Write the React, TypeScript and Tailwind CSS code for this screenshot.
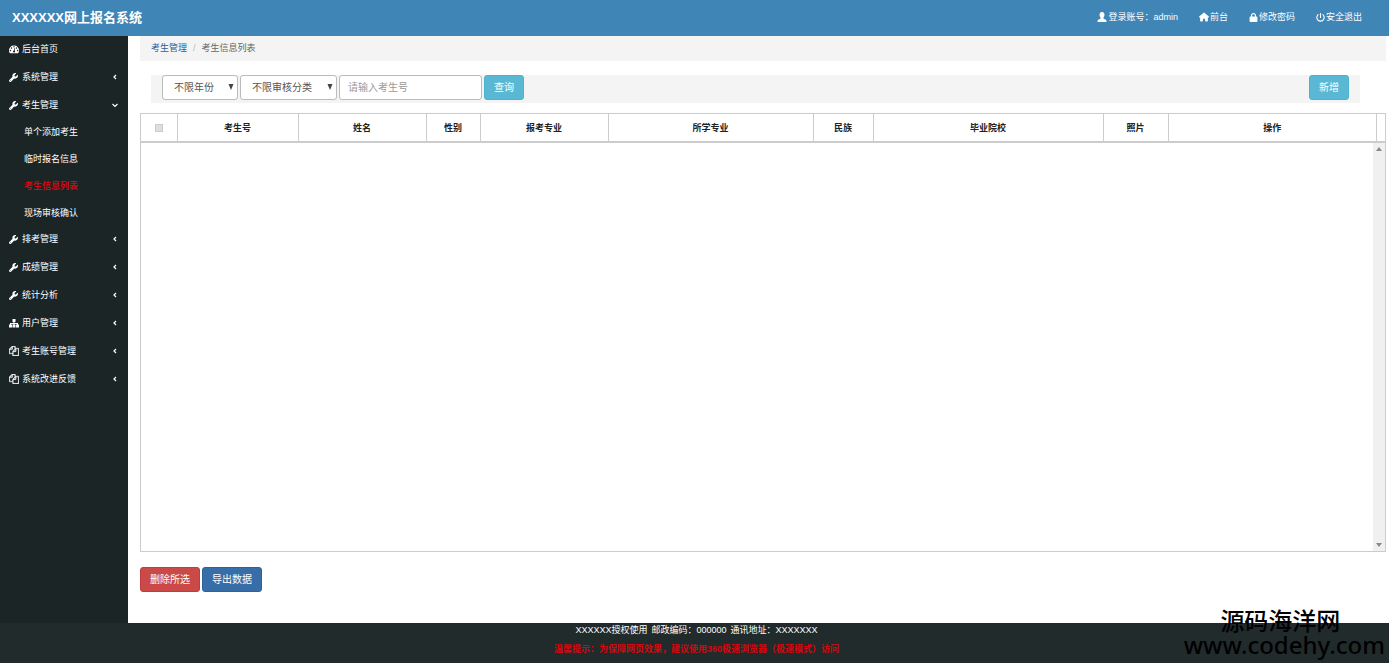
import React, { type FC, type ReactNode } from "react";
import { FaHouse, FaLock, FaPowerOff, FaWrench } from "react-icons/fa6";

interface MenuItem {
  label: string;
  icon: ReactNode;
  arrow?: boolean;
  children?: string[];
}

const menu: MenuItem[] = [
  { label: "后台首页", icon: <DashboardIcon /> },
  { label: "系统管理", icon: <FaWrench />, arrow: true },
  {
    label: "考生管理",
    icon: <FaWrench />,
    arrow: true,
    children: ["单个添加考生", "临时报名信息", "考生信息列表", "现场审核确认"],
  },
  { label: "排考管理", icon: <FaWrench />, arrow: true },
  { label: "成绩管理", icon: <FaWrench />, arrow: true },
  { label: "统计分析", icon: <FaWrench />, arrow: true },
  { label: "用户管理", icon: <SitemapIcon />, arrow: true },
  { label: "考生账号管理", icon: <CopyIcon />, arrow: true },
  { label: "系统改进反馈", icon: <CopyIcon />, arrow: true },
];

const activeItem = "考生信息列表";

const columns = [
  { label: "考生号", width: "w-[121px]" },
  { label: "姓名", width: "w-[128px]" },
  { label: "性别", width: "w-[54px]" },
  { label: "报考专业", width: "w-[128px]" },
  { label: "所学专业", width: "w-[205px]" },
  { label: "民族", width: "w-[60px]" },
  { label: "毕业院校", width: "w-[230px]" },
  { label: "照片", width: "w-[65px]" },
  { label: "操作", width: "" },
];

function DashboardIcon() {
  return (
    <svg viewBox="0 0 1792 1792" fill="currentColor" width="10" height="10">
      <path d="M384 1152q0-53-37.500-90.500t-90.500-37.500-90.500 37.500-37.500 90.500 37.500 90.500 90.500 37.500 90.500-37.500 37.500-90.500zm192-448q0-53-37.500-90.500t-90.500-37.500-90.500 37.500-37.500 90.500 37.500 90.500 90.500 37.500 90.500-37.500 37.500-90.500zm428 481l101-382q6-26-7.500-48.500t-38.500-29.500-48 6.500-30 39.500l-101 382q-60 5-107 43.500t-63 98.500q-20 77 20 146t117 89 146-20 89-117q16-60-6-117t-72-91zm660-33q0-53-37.500-90.500t-90.500-37.500-90.500 37.500-37.500 90.500 37.500 90.500 90.500 37.500 90.500-37.500 37.500-90.500zm-640-640q0-53-37.500-90.500t-90.500-37.500-90.500 37.500-37.500 90.500 37.500 90.500 90.500 37.500 90.500-37.500 37.500-90.500zm448 192q0-53-37.500-90.500t-90.500-37.500-90.500 37.500-37.500 90.500 37.500 90.500 90.500 37.500 90.500-37.500 37.500-90.500zm320 448q0 261-141 483-19 29-54 29h-1402q-35 0-54-29-141-221-141-483 0-182 71-348t191-286 286-191 348-71 348 71 286 191 191 286 71 348z" />
    </svg>
  );
}

function SitemapIcon() {
  return (
    <svg viewBox="0 0 10 10" fill="currentColor" width="10" height="10">
      <path d="M3.500 1h3v3h-1v1H9v1.500h1V9.500H7v-3h1V6H5.500v.5h1v3h-3v-3h1V6H2v.5h1v3H0v-3h1V5h3.500V4h-1z" />
    </svg>
  );
}

function CopyIcon() {
  return (
    <svg
      viewBox="0 0 1792 1792"
      fill="currentColor"
      stroke="currentColor"
      strokeWidth="60"
      width="10"
      height="10"
    >
      <path d="M1696 384q40 0 68 28t28 68v1216q0 40-28 68t-68 28h-960q-40 0-68-28t-28-68v-288h-544q-40 0-68-28t-28-68v-672q0-40 20-88t48-76l408-408q28-28 76-48t88-20h416q40 0 68 28t28 68v328q68-40 128-40h416zm-544 213l-299 299h299v-299zm-640-384l-299 299h299v-299zm196 647l316-316v-416h-384v416q0 40-28 68t-68 28h-416v640h512v-256q0-40 20-88t48-76zm956 804v-1152h-384v416q0 40-28 68t-68 28h-416v640h896z" />
    </svg>
  );
}

const UserIcon: FC = () => (
  <svg viewBox="0 0 20 20" fill="currentColor" width="10" height="10">
    <path d="M10 0c3.200 0 5 2.400 5 5.400 0 2.200-.9 4.200-2.200 5.400v1.700c0 .5.300.9.800 1.100l4 2c.8.400 1.300 1 1.300 1.900V20H1.100v-2.500c0-.9.500-1.500 1.300-1.900l4-2c.5-.2.800-.6.800-1.100v-1.700C5.900 9.600 5 7.600 5 5.400 5 2.400 6.800 0 10 0z" />
  </svg>
);

const Chevron: FC<{ open: boolean }> = ({ open }) => (
  <svg
    viewBox="0 0 6 6"
    fill="none"
    stroke="currentColor"
    strokeWidth="1.2"
    className="mb-0.5 size-1.5"
  >
    <path d={open ? "M0.500 2L3 4.500L5.500 2" : "M4 1L2 3L4 5"} />
  </svg>
);

const Header: FC = () => {
  const links = [
    { label: "登录账号：admin", icon: <UserIcon /> },
    { label: "前台", icon: <FaHouse size={10} /> },
    { label: "修改密码", icon: <FaLock size={9} /> },
    { label: "安全退出", icon: <FaPowerOff size={9} /> },
  ];

  return (
    <header className="flex h-9 items-center justify-between bg-[#3f85b5] pr-[27px] pl-3 text-white">
      <h1 className="text-[13px] font-bold">XXXXXX网上报名系统</h1>
      <nav className="flex items-center gap-[21px] text-[9px]">
        {links.map((link) => (
          <a key={link.label} href="#" className="flex items-center gap-px">
            <span className="pb-0.5">{link.icon}</span>
            {link.label}
          </a>
        ))}
      </nav>
    </header>
  );
};

const Sidebar: FC = () => (
  <aside className="w-32 shrink-0 bg-[#1c2526] text-[9px] text-white">
    <ul>
      {menu.map((item) => (
        <li key={item.label}>
          <a href="#" className="flex h-7 items-center pr-[10px] pl-[9px]">
            <span className="flex w-[13px] pb-0.5">{item.icon}</span>
            <span className="grow">{item.label}</span>
            {item.arrow && <Chevron open={Boolean(item.children)} />}
          </a>
          {item.children && (
            <ul className="-my-px">
              {item.children.map((child) => (
                <li key={child}>
                  <a
                    href="#"
                    className={`flex h-[27px] items-center pl-6 ${
                      child === activeItem ? "font-bold text-[#d5070c]" : ""
                    }`}
                  >
                    {child}
                  </a>
                </li>
              ))}
            </ul>
          )}
        </li>
      ))}
    </ul>
  </aside>
);

interface SelectProps {
  label: string;
  option: string;
  width: string;
}

const Select: FC<SelectProps> = ({ label, option, width }) => (
  <div className={`relative ${width}`}>
    <select
      aria-label={label}
      className="block h-[25px] w-full appearance-none rounded-[3px] border border-[#bbb] bg-white pl-[11px] text-[10px] text-[#555]"
    >
      <option>{option}</option>
    </select>
    <svg
      viewBox="0 0 6 6"
      className="pointer-events-none absolute top-[9px] right-1 size-1.5 fill-[#444]"
    >
      <path d="M0.500 0h5L3 6z" />
    </svg>
  </div>
);

const FilterBar: FC = () => (
  <form className="mt-[14px] mr-[26px] ml-[11px] flex h-7 items-start gap-0.5 bg-[#f4f4f4] px-[11px]">
    <Select label="年份" option="不限年份" width="w-[76px]" />
    <Select label="审核分类" option="不限审核分类" width="w-[97px]" />
    <input
      type="text"
      aria-label="考生号"
      placeholder="请输入考生号"
      className="h-[25px] w-[143px] rounded-[3px] border border-[#bbb] bg-white px-2 text-[10px] placeholder:text-[#999]"
    />
    <button
      type="button"
      className="h-[25px] w-10 rounded-[3px] border border-[#4bb3d0] bg-[#5bb8d5] text-[10px] text-white"
    >
      查询
    </button>
    <button
      type="button"
      className="ml-auto h-[25px] w-10 rounded-[3px] border border-[#4bb3d0] bg-[#5bb8d5] text-[10px] text-white"
    >
      新增
    </button>
  </form>
);

const StudentTable: FC = () => (
  <div className="mt-[10px] flex grow flex-col border border-[#ccc]">
    <div className="border-b-2 border-[#ccc] pr-2">
      <table className="w-full table-fixed text-[9px] text-[#222]">
        <thead>
          <tr className="h-[27px]">
            <th className="w-9 border-r border-[#ccc]">
              <input
                type="checkbox"
                aria-label="全选"
                className="mx-auto block size-2 appearance-none border border-[#ccc] bg-[#ddd]"
              />
            </th>
            {columns.map((column) => (
              <th
                key={column.label}
                className={`border-r border-[#ccc] pt-0.5 font-bold ${column.width}`}
              >
                {column.label}
              </th>
            ))}
          </tr>
        </thead>
      </table>
    </div>
    <div className="flex grow justify-end">
      <div className="flex w-3 flex-col items-center justify-between bg-[#f0f0f0] py-1">
        <svg viewBox="0 0 6 4" className="w-1.5 fill-[#888]">
          <path d="M0 4h6L3 0z" />
        </svg>
        <svg viewBox="0 0 6 4" className="w-1.5 fill-[#888]">
          <path d="M0 0h6L3 4z" />
        </svg>
      </div>
    </div>
  </div>
);

const Footer: FC = () => (
  <footer className="relative h-10 bg-[#222b2c] text-center text-[9px] text-white">
    <p className="flex h-[15px] items-center justify-center gap-1 pl-1">
      <span>XXXXXX授权使用</span>
      <span>邮政编码：000000</span>
      <span>通讯地址：XXXXXXX</span>
    </p>
    <p className="flex h-6 items-center justify-center pl-1 font-bold text-[#d5070c]">
      温馨提示：为保障网页效果，建议使用360极速浏览器（极速模式）访问
    </p>
    <div className="absolute right-1 bottom-1.5 text-center font-['Noto_Sans','Noto_Sans_CJK_SC',sans-serif] text-[24px] leading-6 font-medium text-black">
      <div className="pr-2">源码海洋网</div>
      <div>www.codehy.com</div>
    </div>
  </footer>
);

export default function App() {
  return (
    <div className="flex min-h-screen flex-col bg-white font-['Liberation_Sans','Noto_Sans_CJK_SC',sans-serif] leading-normal">
      <Header />
      <div className="flex grow">
        <Sidebar />
        <main className="flex grow flex-col pr-[3px] pb-[31px] pl-3">
          <nav className="flex h-[25px] items-center gap-[6px] bg-[#f4f4f4] px-[11px] text-[9px] text-[#666]">
            <a href="#" className="text-[#2f5d94]">
              考生管理
            </a>
            <span className="text-[#bbb]">/</span>
            <span>考生信息列表</span>
          </nav>
          <FilterBar />
          <StudentTable />
          <div className="mt-[15px] flex gap-0.5 text-[10px] text-white">
            <button
              type="button"
              className="h-[25px] w-[60px] rounded-[3px] border border-[#bd3f3b] bg-[#cb4a47]"
            >
              删除所选
            </button>
            <button
              type="button"
              className="h-[25px] w-[60px] rounded-[3px] border border-[#2f6299] bg-[#376ea8]"
            >
              导出数据
            </button>
          </div>
        </main>
      </div>
      <Footer />
    </div>
  );
}
